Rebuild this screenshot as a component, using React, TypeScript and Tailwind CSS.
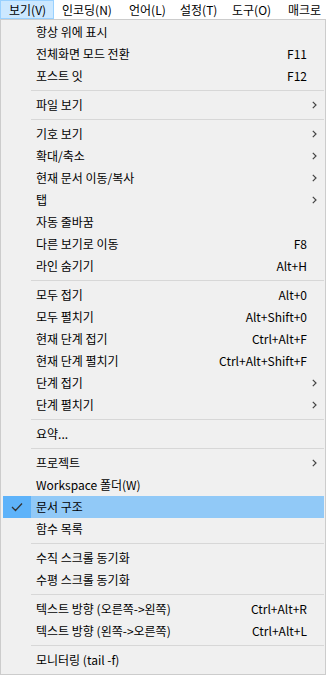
import React from 'react';

type Entry =
  | { kind: 'sep' }
  | { kind: 'item'; label: string; shortcut?: string; submenu?: boolean; checked?: boolean; active?: boolean };

const MENUBAR = [
  { label: '보기(V)', w: 'w-[54px]', open: true },
  { label: '인코딩(N)', w: 'w-[67px]' },
  { label: '언어(L)', w: 'w-[51px]' },
  { label: '설정(T)', w: 'w-[52px]' },
  { label: '도구(O)', w: 'w-[56px]' },
  { label: '매크로', w: 'w-[48px]' },
];

const SEP: Entry = { kind: 'sep' };

const ENTRIES: Entry[] = [
  { kind: 'item', label: '항상 위에 표시' },
  { kind: 'item', label: '전체화면 모드 전환', shortcut: 'F11' },
  { kind: 'item', label: '포스트 잇', shortcut: 'F12' },
  SEP,
  { kind: 'item', label: '파일 보기', submenu: true },
  SEP,
  { kind: 'item', label: '기호 보기', submenu: true },
  { kind: 'item', label: '확대/축소', submenu: true },
  { kind: 'item', label: '현재 문서 이동/복사', submenu: true },
  { kind: 'item', label: '탭', submenu: true },
  { kind: 'item', label: '자동 줄바꿈' },
  { kind: 'item', label: '다른 보기로 이동', shortcut: 'F8' },
  { kind: 'item', label: '라인 숨기기', shortcut: 'Alt+H' },
  SEP,
  { kind: 'item', label: '모두 접기', shortcut: 'Alt+0' },
  { kind: 'item', label: '모두 펼치기', shortcut: 'Alt+Shift+0' },
  { kind: 'item', label: '현재 단계 접기', shortcut: 'Ctrl+Alt+F' },
  { kind: 'item', label: '현재 단계 펼치기', shortcut: 'Ctrl+Alt+Shift+F' },
  { kind: 'item', label: '단계 접기', submenu: true },
  { kind: 'item', label: '단계 펼치기', submenu: true },
  SEP,
  { kind: 'item', label: '요약...' },
  SEP,
  { kind: 'item', label: '프로젝트', submenu: true },
  { kind: 'item', label: 'Workspace 폴더(W)' },
  { kind: 'item', label: '문서 구조', checked: true, active: true },
  { kind: 'item', label: '함수 목록' },
  SEP,
  { kind: 'item', label: '수직 스크롤 동기화' },
  { kind: 'item', label: '수평 스크롤 동기화' },
  SEP,
  { kind: 'item', label: '텍스트 방향 (오른쪽->왼쪽)', shortcut: 'Ctrl+Alt+R' },
  { kind: 'item', label: '텍스트 방향 (왼쪽->오른쪽)', shortcut: 'Ctrl+Alt+L' },
  SEP,
  { kind: 'item', label: '모니터링 (tail -f)' },
];

function Check() {
  return (
    <svg width="12" height="10" viewBox="0 0 12 10" className="text-[#333]">
      <polyline points="1,5 4.5,8.5 11,1.5" fill="none" stroke="currentColor" strokeWidth="1.3" />
    </svg>
  );
}

function Chevron() {
  return (
    <svg width="5" height="8" viewBox="0 0 5 8" className="text-[#444]">
      <polyline points="0.8,0.8 4,4 0.8,7.2" fill="none" stroke="currentColor" strokeWidth="1.2" />
    </svg>
  );
}

export default function App() {
  return (
    <div
      className="w-[328px] h-[675px] overflow-hidden bg-white text-[12px] text-black"
      style={{ fontFamily: '"Noto Sans CJK KR", "Noto Sans", sans-serif' }}
    >
      <div className="flex h-[19px]">
        {MENUBAR.map((m) => (
          <div
            key={m.label}
            className={`${m.w} shrink-0 flex items-center pl-[8px] whitespace-nowrap leading-none ${
              m.open ? 'bg-[#cce8ff] border border-[#99d1ff] pl-[7px]' : ''
            }`}
          >
            {m.label}
          </div>
        ))}
      </div>

      <div className="w-[326px] h-[656px] bg-[#f0f0f0] border border-[#cccccc] pt-[1px] pl-[2px] pr-[1px]">
        {ENTRIES.map((e, i) =>
          e.kind === 'sep' ? (
            <div key={i} className="h-[7px] flex items-center pl-[28px]">
              <div className="h-px w-full bg-[#d7d7d7]" />
            </div>
          ) : (
            <div
              key={i}
              className={`h-[22px] flex items-center whitespace-nowrap ${e.active ? 'bg-[#91c9f7]' : ''}`}
            >
              <div
                className={`w-[28px] h-full shrink-0 flex items-center justify-center ${
                  e.active ? 'bg-[#5eb3fa]' : ''
                }`}
              >
                {e.checked && <Check />}
              </div>
              <span className="pl-[5px] leading-none">{e.label}</span>
              <span className="ml-auto leading-none pr-[17px]">{e.shortcut}</span>
              {e.submenu && (
                <span className="w-[17px] flex justify-start pl-[5px] -ml-[17px]">
                  <Chevron />
                </span>
              )}
            </div>
          ),
        )}
      </div>
    </div>
  );
}
